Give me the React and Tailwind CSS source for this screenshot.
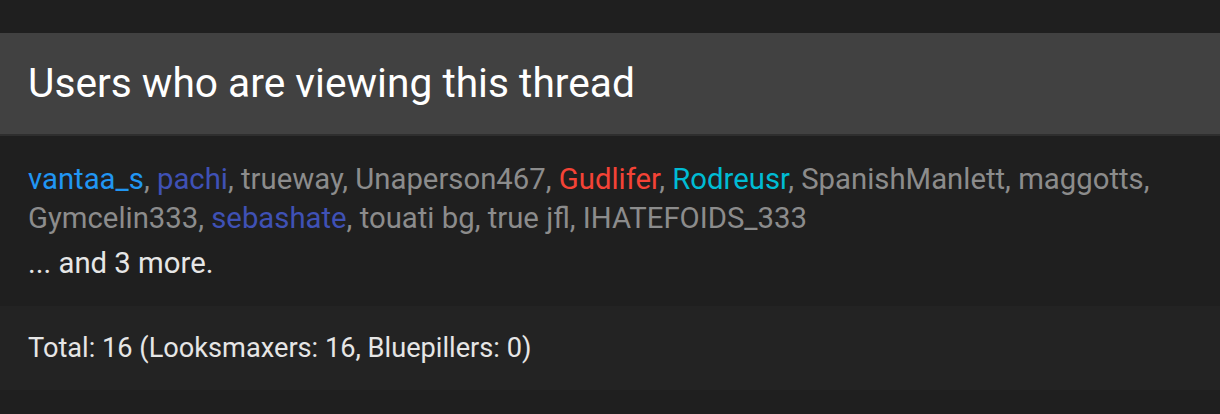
import React from "react";

const users = [
  { name: "vantaa_s", color: "text-[#2196f3]" },
  { name: "pachi", color: "text-[#3f51b5]" },
  { name: "trueway" },
  { name: "Unaperson467" },
  { name: "Gudlifer", color: "text-[#f44336]" },
  { name: "Rodreusr", color: "text-[#00bcd4]" },
  { name: "SpanishManlett" },
  { name: "maggotts" },
  { name: "Gymcelin333" },
  { name: "sebashate", color: "text-[#3f51b5]" },
  { name: "touati bg" },
  { name: "true jfl" },
  { name: "IHATEFOIDS_333" },
];

export default function App() {
  return (
    <div className="w-[1220px] h-[414px] bg-[#1f1f1f] font-['Roboto',sans-serif] pt-[33px]">
      <div className="bg-[#414141] border-b-2 border-[#2e2e2e] h-[103px] flex items-center px-7">
        <h3 className="text-[40.7px] text-white font-normal">Users who are viewing this thread</h3>
      </div>
      <div className="px-7 pt-[24px] h-[170px] text-[29.3px] leading-[39px] text-[#8c8c8c]">
        <ul className="flex flex-wrap">
          {users.map((u, i) => (
            <li key={u.name} className="whitespace-pre">
              <span className={u.color}>{u.name}</span>
              {i < users.length - 1 ? ", " : ""}
            </li>
          ))}
        </ul>
        <div className="text-[#e6e6e6] mt-[6px]">... and 3 more.</div>
      </div>
      <div className="bg-[#232323] h-[84px] px-7 flex items-center text-[27.2px] text-[#e6e6e6]">
        Total: 16 (Looksmaxers: 16, Bluepillers: 0)
      </div>
    </div>
  );
}
